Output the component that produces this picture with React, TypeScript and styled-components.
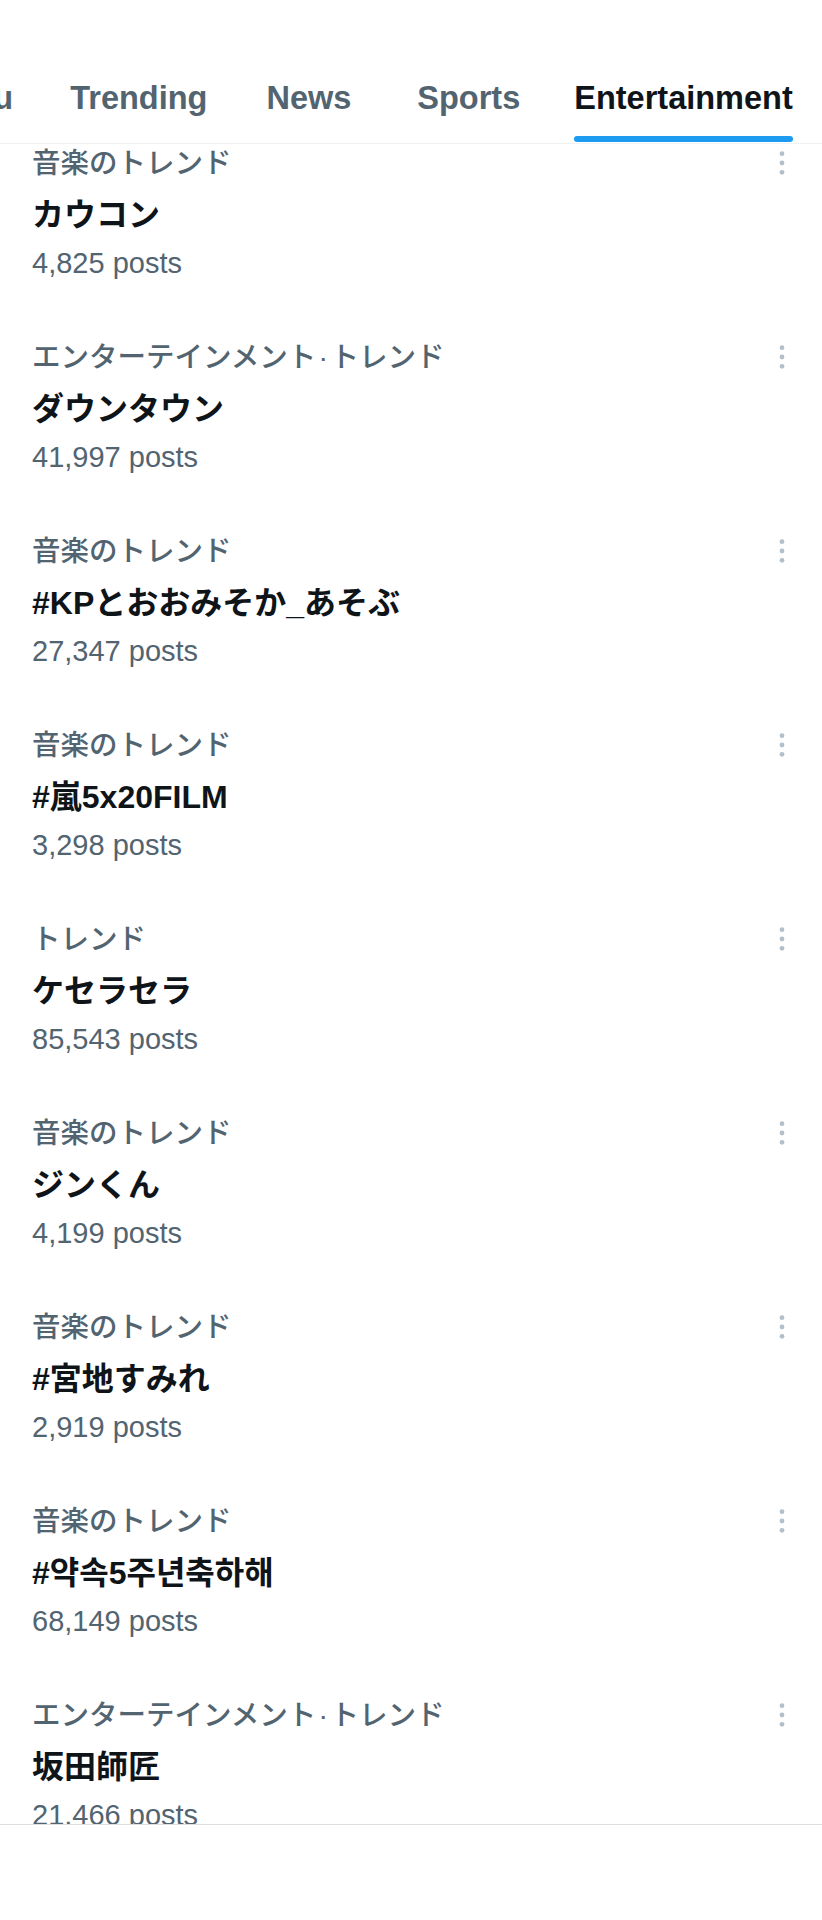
import React from "react";
import styled, { createGlobalStyle } from "styled-components";

const GlobalStyle = createGlobalStyle`
  html, body {
    margin: 0;
    padding: 0;
    background: #ffffff;
  }
  body {
    font-family: "Liberation Sans", "Noto Sans CJK JP", "Noto Sans CJK KR", sans-serif;
    -webkit-font-smoothing: antialiased;
  }
  * { box-sizing: border-box; }
`;

const FONT = `"Liberation Sans", "Noto Sans CJK JP", "Noto Sans CJK KR", sans-serif`;

const Screen = styled.div`
  width: 822px;
  height: 1920px;
  display: flex;
  flex-direction: column;
  background: #ffffff;
  overflow: hidden;
`;

const Header = styled.header`
  flex: 0 0 auto;
  height: 144px;
  border-bottom: 1px solid #eff3f4;
  background: #ffffff;
  overflow: hidden;
  position: relative;
  z-index: 1;
`;

const TabStrip = styled.nav<{ $offset: number }>`
  display: flex;
  height: 143px;
  margin-left: ${(p) => p.$offset}px;
  white-space: nowrap;
`;

const Tab = styled.div<{ $padLeft: number; $padRight: number }>`
  flex: 0 0 auto;
  display: flex;
  flex-direction: column;
  align-items: center;
  padding: 78px ${(p) => p.$padRight}px 0 ${(p) => p.$padLeft}px;
`;

const TabLabel = styled.span<{ $active: boolean }>`
  font-family: ${FONT};
  font-size: 32.5px;
  line-height: 40px;
  font-weight: 700;
  color: ${(p) => (p.$active ? "#0f1419" : "#536471")};
`;

const Indicator = styled.div<{ $active: boolean }>`
  align-self: stretch;
  height: 6px;
  margin-top: 18px;
  border-radius: 3px;
  background: ${(p) => (p.$active ? "#1d9bf0" : "transparent")};
`;

const Viewport = styled.main`
  flex: 1 1 auto;
  overflow: hidden;
`;

const List = styled.ul<{ $scroll: number }>`
  list-style: none;
  margin: ${(p) => -p.$scroll}px 0 0;
  padding: 0;
`;

const TrendItem = styled.li`
  display: flex;
  align-items: flex-start;
  height: 194px;
  padding: 32px 30px 0 32px;
`;

const TrendBody = styled.div`
  flex: 1 1 auto;
  display: flex;
  flex-direction: column;
  min-width: 0;
`;

const Category = styled.div`
  font-family: ${FONT};
  font-size: 28.5px;
  line-height: 32px;
  font-weight: 500;
  color: #536471;
  white-space: nowrap;
`;

const Title = styled.div`
  margin-top: 16px;
  font-family: ${FONT};
  font-size: 32px;
  line-height: 40px;
  font-weight: 700;
  color: #0f1419;
  white-space: nowrap;
`;

const Posts = styled.div`
  margin-top: 12px;
  font-family: ${FONT};
  font-size: 29px;
  line-height: 32px;
  color: #536471;
  white-space: nowrap;
`;

const MoreButton = styled.div`
  flex: 0 0 auto;
  width: 20px;
  height: 32px;
  display: flex;
  align-items: center;
  justify-content: center;
`;

const BottomBar = styled.footer`
  flex: 0 0 auto;
  height: 96px;
  border-top: 1px solid #dedfe0;
  background: #ffffff;
`;

const MoreIcon = () => (
  <svg width="20" height="32" viewBox="0 0 20 32" aria-hidden="true">
    <circle cx="10" cy="6.7" r="2.4" fill="#b3c0ca" />
    <circle cx="10" cy="16" r="2.4" fill="#b3c0ca" />
    <circle cx="10" cy="25.3" r="2.4" fill="#b3c0ca" />
  </svg>
);

const tabs = [
  { label: "For you", active: false, padLeft: 31, padRight: 31 },
  { label: "Trending", active: false, padLeft: 26, padRight: 28 },
  { label: "News", active: false, padLeft: 31, padRight: 33 },
  { label: "Sports", active: false, padLeft: 33, padRight: 26 },
  { label: "Entertainment", active: true, padLeft: 28, padRight: 31 },
];

const DOT = "\u200A·\u200A";

const trends = [
  { category: "音楽のトレンド", title: "カウコン", posts: "4,825 posts" },
  { category: `エンターテインメント${DOT}トレンド`, title: "ダウンタウン", posts: "41,997 posts" },
  { category: "音楽のトレンド", title: "#KPとおおみそか_あそぶ", posts: "27,347 posts" },
  { category: "音楽のトレンド", title: "#嵐5x20FILM", posts: "3,298 posts" },
  { category: "トレンド", title: "ケセラセラ", posts: "85,543 posts" },
  { category: "音楽のトレンド", title: "ジンくん", posts: "4,199 posts" },
  { category: "音楽のトレンド", title: "#宮地すみれ", posts: "2,919 posts" },
  { category: "音楽のトレンド", title: "#약속5주년축하해", posts: "68,149 posts" },
  { category: `エンターテインメント${DOT}トレンド`, title: "坂田師匠", posts: "21,466 posts" },
];

export default function App() {
  return (
    <>
      <GlobalStyle />
      <Screen>
        <Header>
          <TabStrip $offset={-137}>
            {tabs.map((t) => (
              <Tab key={t.label} $padLeft={t.padLeft} $padRight={t.padRight}>
                <TabLabel $active={t.active}>{t.label}</TabLabel>
                <Indicator $active={t.active} />
              </Tab>
            ))}
          </TabStrip>
        </Header>
        <Viewport>
          <List $scroll={29}>
            {trends.map((t, i) => (
              <TrendItem key={i}>
                <TrendBody>
                  <Category>{t.category}</Category>
                  <Title>{t.title}</Title>
                  <Posts>{t.posts}</Posts>
                </TrendBody>
                <MoreButton>
                  <MoreIcon />
                </MoreButton>
              </TrendItem>
            ))}
          </List>
        </Viewport>
        <BottomBar />
      </Screen>
    </>
  );
}
